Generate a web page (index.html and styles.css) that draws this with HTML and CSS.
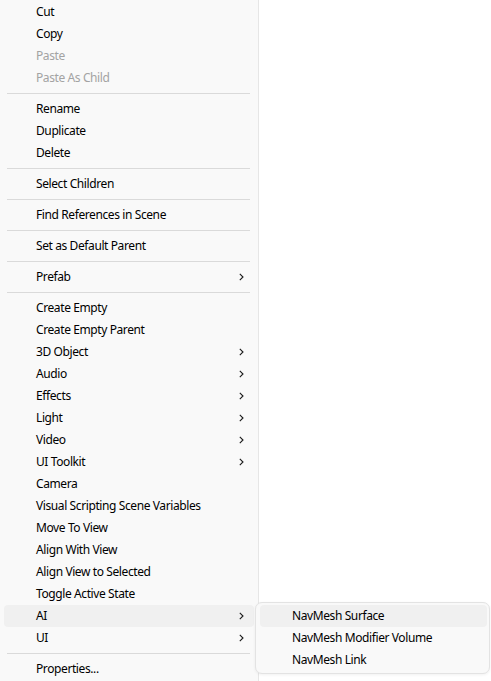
FILE: index.html
```html
<!DOCTYPE html>
<html>
<head>
<meta charset="utf-8">
<link rel="stylesheet" href="styles.css">
</head>
<body>
<div class="menu">
  <div class="item">Cut</div>
  <div class="item">Copy</div>
  <div class="item disabled">Paste</div>
  <div class="item disabled">Paste As Child</div>
  <div class="sep"></div>
  <div class="item">Rename</div>
  <div class="item">Duplicate</div>
  <div class="item">Delete</div>
  <div class="sep"></div>
  <div class="item">Select Children</div>
  <div class="sep"></div>
  <div class="item">Find References in Scene</div>
  <div class="sep"></div>
  <div class="item">Set as Default Parent</div>
  <div class="sep"></div>
  <div class="item sub">Prefab<svg class="chev" width="5" height="8" viewBox="0 0 5 8"><path d="M0.8 0.8 L4 4 L0.8 7.2" fill="none" stroke="#1a1a1a" stroke-width="1.1"/></svg></div>
  <div class="sep"></div>
  <div class="item">Create Empty</div>
  <div class="item">Create Empty Parent</div>
  <div class="item sub">3D Object<svg class="chev" width="5" height="8" viewBox="0 0 5 8"><path d="M0.8 0.8 L4 4 L0.8 7.2" fill="none" stroke="#1a1a1a" stroke-width="1.1"/></svg></div>
  <div class="item sub">Audio<svg class="chev" width="5" height="8" viewBox="0 0 5 8"><path d="M0.8 0.8 L4 4 L0.8 7.2" fill="none" stroke="#1a1a1a" stroke-width="1.1"/></svg></div>
  <div class="item sub">Effects<svg class="chev" width="5" height="8" viewBox="0 0 5 8"><path d="M0.8 0.8 L4 4 L0.8 7.2" fill="none" stroke="#1a1a1a" stroke-width="1.1"/></svg></div>
  <div class="item sub">Light<svg class="chev" width="5" height="8" viewBox="0 0 5 8"><path d="M0.8 0.8 L4 4 L0.8 7.2" fill="none" stroke="#1a1a1a" stroke-width="1.1"/></svg></div>
  <div class="item sub">Video<svg class="chev" width="5" height="8" viewBox="0 0 5 8"><path d="M0.8 0.8 L4 4 L0.8 7.2" fill="none" stroke="#1a1a1a" stroke-width="1.1"/></svg></div>
  <div class="item sub">UI Toolkit<svg class="chev" width="5" height="8" viewBox="0 0 5 8"><path d="M0.8 0.8 L4 4 L0.8 7.2" fill="none" stroke="#1a1a1a" stroke-width="1.1"/></svg></div>
  <div class="item">Camera</div>
  <div class="item">Visual Scripting Scene Variables</div>
  <div class="item">Move To View</div>
  <div class="item">Align With View</div>
  <div class="item">Align View to Selected</div>
  <div class="item">Toggle Active State</div>
  <div class="item sub active">AI<svg class="chev" width="5" height="8" viewBox="0 0 5 8"><path d="M0.8 0.8 L4 4 L0.8 7.2" fill="none" stroke="#1a1a1a" stroke-width="1.1"/></svg></div>
  <div class="item sub">UI<svg class="chev" width="5" height="8" viewBox="0 0 5 8"><path d="M0.8 0.8 L4 4 L0.8 7.2" fill="none" stroke="#1a1a1a" stroke-width="1.1"/></svg></div>
  <div class="sep"></div>
  <div class="item">Properties...</div>
</div>
<div class="submenu">
  <div class="item active">NavMesh Surface</div>
  <div class="item">NavMesh Modifier Volume</div>
  <div class="item">NavMesh Link</div>
</div>
</body>
</html>
```
FILE: styles.css
```css
html, body {
  margin: 0;
  padding: 0;
  background: #ffffff;
  width: 491px;
  height: 681px;
  overflow: hidden;
}
body {
  font-family: "Noto Sans", "Open Sans", sans-serif;
  font-size: 12px;
  letter-spacing: -0.4px;
  color: #000000;
}
.menu {
  width: 259px;
  height: 681px;
  box-sizing: border-box;
  background: #f9f9f9;
  border-right: 1px solid #e6e6e6;
  padding-top: 1px;
}
.item {
  box-sizing: border-box;
  height: 22px;
  display: flex;
  align-items: center;
  justify-content: space-between;
  padding: 0 10px 2px 32px;
  margin: 0 4px 0 4px;
  border-radius: 4px;
  white-space: nowrap;
}
.item.disabled {
  color: #a3a3a3;
}
.item.active {
  background: #f0f0f0;
}
.chev {
  display: block;
  margin-top: 2px;
}
.sep {
  height: 9px;
  margin: 0 8px 0 7px;
  display: flex;
  align-items: center;
}
.sep::before {
  content: "";
  display: block;
  width: 100%;
  height: 1px;
  background: #dadada;
}
.submenu {
  position: absolute;
  left: 255px;
  top: 602px;
  width: 235px;
  box-sizing: border-box;
  background: #f9f9f9;
  border: 1px solid #e3e3e3;
  border-radius: 7px;
  padding: 2px 2px 2px 4px;
  box-shadow: 0 1px 3px rgba(0,0,0,0.06);
}
.submenu .item {
  margin: 0;
}
```
